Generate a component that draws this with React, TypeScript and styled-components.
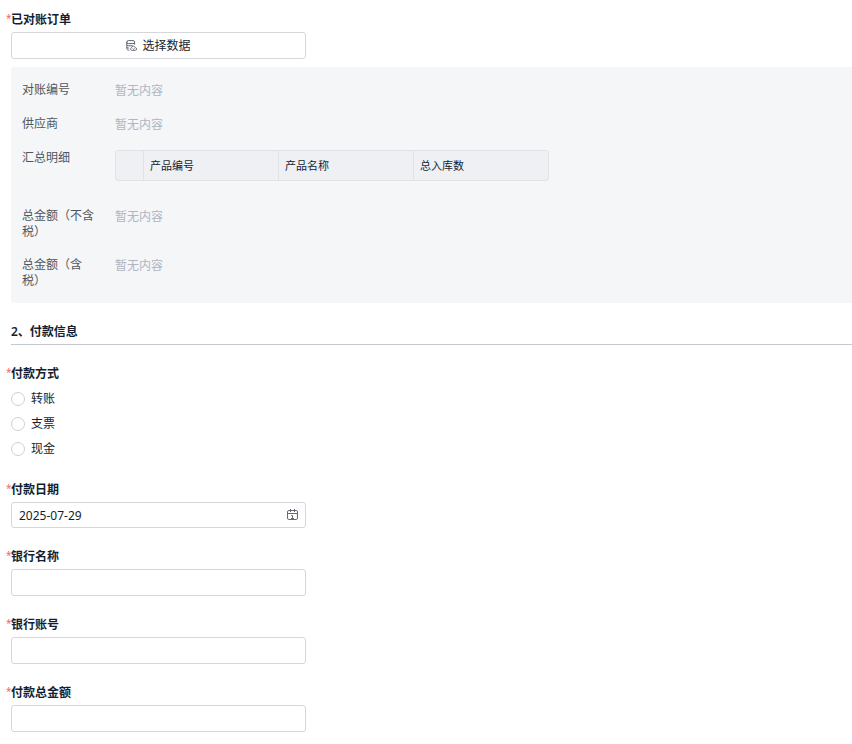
import React, { useState } from "react";
import styled, { createGlobalStyle } from "styled-components";

const GlobalStyle = createGlobalStyle`
  *, *::before, *::after { box-sizing: border-box; }
  body {
    margin: 0;
    background: #fff;
    color: #141e31;
    font: 12px/20px "Noto Sans", "Noto Sans CJK SC", sans-serif;
  }
  button, input { font: inherit; color: inherit; }
`;

const Form = styled.form`
  display: flex;
  flex-direction: column;
  padding: 10px 0 12px 11px;
`;

const Field = styled.div<{ $first?: boolean }>`
  margin-top: ${(p) => (p.$first ? 0 : 19)}px;
`;

const FieldLabel = styled.label`
  display: flex;
  margin: 0 0 2px -5px;
  font-weight: 700;
`;

const Group = styled.fieldset`
  min-width: 0;
  margin: 19px 0 0;
  padding: 0;
  border: 0;
`;

const GroupLabel = styled(FieldLabel).attrs({ as: "legend" })`
  padding: 0;
`;

const Star = styled.span`
  flex: none;
  width: 5px;
  color: #f06a6a;
  font-weight: 400;
  font-size: 10px;
  line-height: 16px;
`;

const PickButton = styled.button`
  display: flex;
  align-items: center;
  justify-content: center;
  gap: 5px;
  width: 100%;
  max-width: 295px;
  height: 27px;
  padding: 0;
  border: 1px solid #d5d7db;
  border-radius: 3px;
  background: #fff;
  cursor: pointer;
  svg { color: #5b6370; }
`;

const Panel = styled.dl`
  display: flex;
  flex-direction: column;
  gap: 17px;
  margin: 8px 0 0;
  padding: 15px 11px 14px;
  border-radius: 3px 0 0 3px;
  background: #f4f6f8;
`;

const PanelRow = styled.div<{ $tall?: boolean }>`
  display: grid;
  grid-template-columns: 78px 1fr;
  column-gap: 15px;
  min-height: ${(p) => (p.$tall ? 41 : 17)}px;
`;

const Term = styled.dt`
  color: #50565f;
  line-height: 16px;
`;

const Detail = styled.dd`
  margin: 0;
  color: #b0b5bf;
  line-height: 17px;
`;

const Table = styled.table`
  width: 100%;
  max-width: 434px;
  table-layout: fixed;
  border: 1px solid #e0e2e5;
  border-radius: 3px;
  border-spacing: 0;
  background: #eff0f4;
  color: #141e31;
  font-size: 11px;
`;

const HeadCell = styled.th`
  height: 29px;
  padding: 0 6px;
  border-left: 1px solid #e0e2e5;
  font-weight: 400;
  text-align: left;
`;

const IndexCell = styled.td`
  width: 27px;
  padding: 0;
`;

const SectionTitle = styled.h2`
  margin: 19px 0 0;
  padding-bottom: 2px;
  border-bottom: 1px solid #c4c9cf;
  font-size: 12px;
  font-weight: 600;
`;

const Option = styled.label`
  display: flex;
  align-items: center;
  gap: 6px;
  width: fit-content;
  height: 25px;
`;

const Radio = styled.input`
  appearance: none;
  width: 14px;
  height: 14px;
  margin: 0;
  border: 1px solid #ced0d5;
  border-radius: 50%;
  background: #fff;
  &:checked { border: 4px solid #2b7cff; }
`;

const InputBox = styled.div<{ $compact?: boolean }>`
  display: flex;
  align-items: center;
  width: 100%;
  max-width: 295px;
  height: ${(p) => (p.$compact ? 26 : 27)}px;
  padding: 0 7px;
  border: 1px solid #d5d7db;
  border-radius: 3px;
  background: #fff;
  &:focus-within { border-color: #2b7cff; }
`;

const TextInput = styled.input`
  flex: 1;
  min-width: 0;
  height: 24px;
  padding: 0;
  border: 0;
  outline: 0;
  background: transparent;
`;

const IconButton = styled.button`
  display: flex;
  padding: 0;
  border: 0;
  background: none;
  color: #636972;
  cursor: pointer;
`;

const DataIcon = () => (
  <svg width="11" height="11" viewBox="0 0 11 11" fill="none" stroke="currentColor" aria-hidden="true">
    <rect x=".8" y=".6" width="7.8" height="3" rx="1.5" />
    <path d="M.8 2.1v6.6c0 .9.9 1.4 2.6 1.5M8.6 2.1v2.6M.8 4.6c.1.8.9 1.2 2 1.2h4M.8 7.2c.1.6.9.9 2 .9" />
    <path d="M5.6 10.3h3.6a1.3 1.3 0 0 0 .2-2.6 2 2 0 0 0-3.8-.1 1.4 1.4 0 0 0 0 2.7ZM6.7 8.6l.9.7 1-.9" strokeWidth=".9" />
  </svg>
);

const CalendarIcon = () => (
  <svg width="12" height="12" viewBox="0 0 12 12" fill="none" stroke="currentColor" aria-hidden="true">
    <rect x="1.5" y="1.5" width="10" height="9" rx="1.4" />
    <path d="M1.5 4.5h10M4.5 0v3M8.5 0v3" />
    <path d="M5.3 6.5h1.2v3M5 9.5h3" />
  </svg>
);

const RequiredLabel = ({ id, text }: { id: string; text: string }) => (
  <FieldLabel htmlFor={id}>
    <Star>*</Star>
    {text}
  </FieldLabel>
);

const EMPTY = "暂无内容";
const columns = ["产品编号", "产品名称", "总入库数"];
const methods = ["转账", "支票", "现金"];
const textFields = [
  { id: "bank-name", label: "银行名称" },
  { id: "bank-account", label: "银行账号" },
  { id: "total", label: "付款总金额" },
];

const EmptyRow = ({ term }: { term: string }) => (
  <PanelRow>
    <Term>{term}</Term>
    <Detail>{EMPTY}</Detail>
  </PanelRow>
);

export default function App() {
  const [date, setDate] = useState("2025-07-29");
  return (
    <>
      <GlobalStyle />
      <Form>
        <Field $first>
          <RequiredLabel id="orders" text="已对账订单" />
          <PickButton id="orders" type="button">
            <DataIcon />
            选择数据
          </PickButton>
          <Panel>
            <EmptyRow term="对账编号" />
            <EmptyRow term="供应商" />
            <PanelRow $tall>
              <Term>汇总明细</Term>
              <Detail>
                <Table>
                  <thead>
                    <tr>
                      <IndexCell />
                      {columns.map((c) => (
                        <HeadCell key={c} scope="col">{c}</HeadCell>
                      ))}
                    </tr>
                  </thead>
                </Table>
              </Detail>
            </PanelRow>
            <EmptyRow term="总金额（不含税）" />
            <EmptyRow term="总金额（含税）" />
          </Panel>
        </Field>

        <SectionTitle>2、付款信息</SectionTitle>

        <Group>
          <GroupLabel>
            <Star>*</Star>
            付款方式
          </GroupLabel>
          {methods.map((m) => (
            <Option key={m}>
              <Radio type="radio" name="method" value={m} />
              {m}
            </Option>
          ))}
        </Group>

        <Field>
          <RequiredLabel id="date" text="付款日期" />
          <InputBox $compact>
            <TextInput id="date" type="text" value={date} onChange={(e) => setDate(e.target.value)} />
            <IconButton type="button" aria-label="选择日期">
              <CalendarIcon />
            </IconButton>
          </InputBox>
        </Field>

        {textFields.map((f) => (
          <Field key={f.id}>
            <RequiredLabel id={f.id} text={f.label} />
            <InputBox>
              <TextInput id={f.id} type="text" />
            </InputBox>
          </Field>
        ))}
      </Form>
    </>
  );
}
